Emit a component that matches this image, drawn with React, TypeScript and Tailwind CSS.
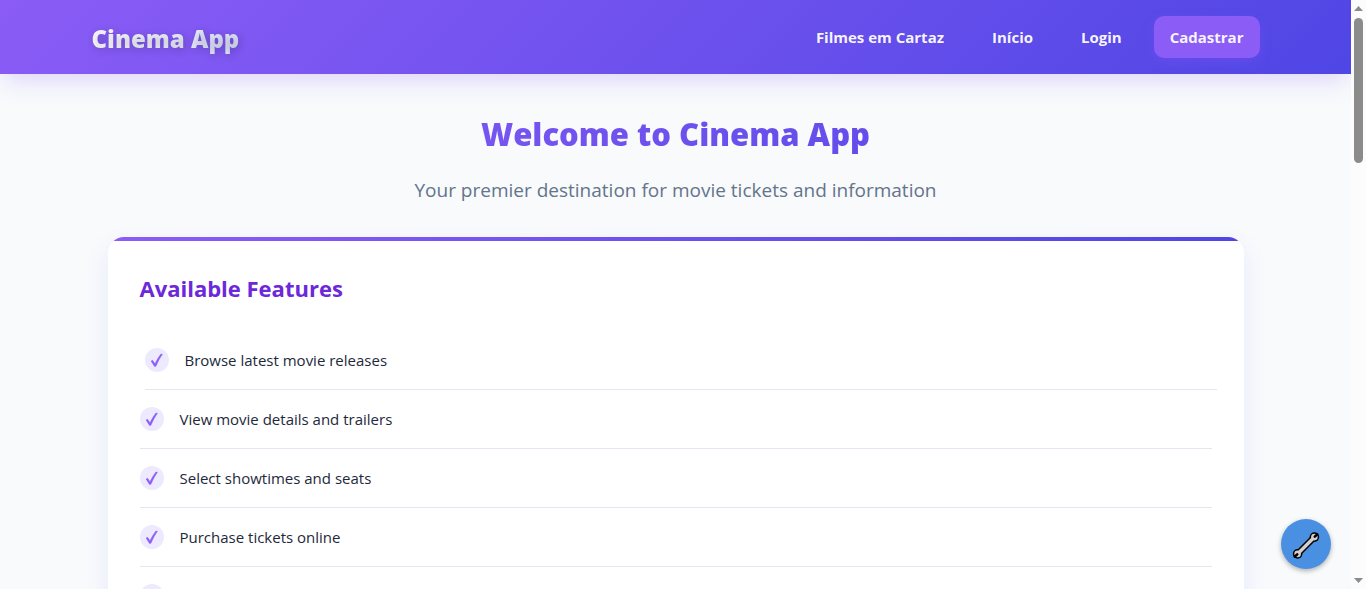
import React from "react";

const features = [
  "Browse latest movie releases",
  "View movie details and trailers",
  "Select showtimes and seats",
  "Purchase tickets online",
  "Customer reviews",
];

const navLinks = ["Filmes em Cartaz", "Início", "Login"];

function CheckBadge() {
  return (
    <span className="size-6 shrink-0 rounded-full bg-[#ede9fe]">
      <svg viewBox="0 0 24 24" className="size-6" aria-hidden="true">
        <path
          d="M6.2 13 L7.6 12.4 L10 16 C11.5 12.6 13.7 9.1 15.8 6.3 L17.3 6.3 C14.7 10 12.6 13.8 10.9 18.1 L9.6 18.4 Z"
          fill="#8b5cf6"
          stroke="#8b5cf6"
          strokeWidth="0.7"
          strokeLinejoin="round"
        />
      </svg>
    </span>
  );
}

function Header() {
  return (
    <header className="relative bg-[linear-gradient(135deg,#8b5cf6,#4f46e5)] shadow-[0_10px_25px_-5px_rgba(139,92,246,0.25)]">
      <div className="mx-auto flex max-w-[1200px] items-center justify-between px-4 py-4">
        <a
          href="#"
          className="bg-[linear-gradient(to_right,#ffffff,#e0e7ff)] bg-clip-text pt-1 text-2xl leading-[38px] font-extrabold text-transparent [text-shadow:2px_2px_8px_rgba(0,0,0,0.2)]"
        >
          Cinema App
        </a>
        <nav className="flex items-center gap-4">
          {navLinks.map((label) => (
            <a key={label} href="#" className="px-4 py-2 text-[15px] leading-[26px] font-bold text-white/95">
              {label}
            </a>
          ))}
          <a
            href="#"
            className="rounded-[10px] bg-[#8b5cf6] px-4 py-2 text-[15px] leading-[26px] font-bold text-white/95 shadow-[0_4px_12px_rgba(139,92,246,0.25)]"
          >
            Cadastrar
          </a>
        </nav>
      </div>
    </header>
  );
}

function Scrollbar() {
  return (
    <div aria-hidden="true" className="flex w-[15px] shrink-0 flex-col items-center bg-[#fcfcfc] py-1.5">
      <svg viewBox="0 0 9 5" className="h-[5px] w-[9px]">
        <path d="M0 5 L4.5 0 L9 5 Z" fill="#8b8b8b" />
      </svg>
      <div className="mt-[7px] h-[145px] w-[9px] rounded-full bg-[#8b8b8b]" />
      <svg viewBox="0 0 9 5" className="mt-auto h-[5px] w-[9px]">
        <path d="M0 0 L4.5 5 L9 0 Z" fill="#8b8b8b" />
      </svg>
    </div>
  );
}

function WrenchIcon() {
  return (
    <svg viewBox="0 0 30 30" className="size-[30px]" aria-hidden="true">
      <g fill="#000" stroke="#000">
        <path d="M7 24.5 L23 8.5" strokeWidth="6.4" />
        <circle cx="23.4" cy="8.1" r="4.8" stroke="none" />
        <circle cx="6.6" cy="24.9" r="4.8" stroke="none" />
      </g>
      <g fill="#d3d0cd" stroke="#d3d0cd">
        <path d="M7 24.5 L23 8.5" strokeWidth="3.4" />
        <circle cx="23.4" cy="8.1" r="3.3" stroke="none" />
        <circle cx="6.6" cy="24.9" r="3.3" stroke="none" />
      </g>
      <g stroke="#000" strokeWidth="2.6" strokeLinecap="round">
        <path d="M23.8 7.7 L26.2 5.3" />
        <path d="M6.2 25.3 L3.8 27.7" />
      </g>
    </svg>
  );
}

export default function App() {
  return (
    <div className="flex h-screen bg-[#f8fafc] font-['Open_Sans','Noto_Sans',sans-serif] text-[#1e293b]">
      <div className="min-w-0 flex-1 overflow-x-hidden overflow-y-auto [scrollbar-width:none]">
        <Header />
        <main className="mx-auto max-w-[1200px] px-8 pt-8 pb-8">
          <div className="text-center">
            <h1 className="mx-auto w-full bg-[linear-gradient(135deg,#8b5cf6,#4f46e5)] bg-clip-text text-[31px] leading-[57px] font-extrabold text-transparent">
              Welcome to Cinema App
            </h1>
            <p className="mt-3 text-[19px] leading-[30px] text-[#64748b]">
              Your premier destination for movie tickets and information
            </p>
          </div>
          <section className="mt-8 overflow-hidden rounded-2xl bg-white shadow-[0_10px_25px_rgba(99,91,246,0.1)]">
            <div className="h-1 bg-[linear-gradient(to_right,#8b5cf6,#4f46e5)]" />
            <div className="px-8 pt-7 pb-8">
              <h2 className="text-[22px] leading-[38px] font-bold text-[#6d28d9]">Available Features</h2>
              <ul className="mt-6">
                {features.map((feature, i) => (
                  <li
                    key={feature}
                    className={
                      "flex items-center gap-4 border-b border-[#e2e8f0] py-4 text-[15px] leading-[26px]" +
                      (i === 0 ? " translate-x-[5px]" : "")
                    }
                  >
                    <CheckBadge />
                    <span>{feature}</span>
                  </li>
                ))}
              </ul>
            </div>
          </section>
        </main>
      </div>
      <Scrollbar />
      <button
        type="button"
        aria-label="Tools"
        className="fixed right-[35px] bottom-5 flex size-[50px] items-center justify-center rounded-full bg-[#4a90e2] shadow-[0_2px_5px_rgba(0,0,0,0.3)]"
      >
        <WrenchIcon />
      </button>
    </div>
  );
}
